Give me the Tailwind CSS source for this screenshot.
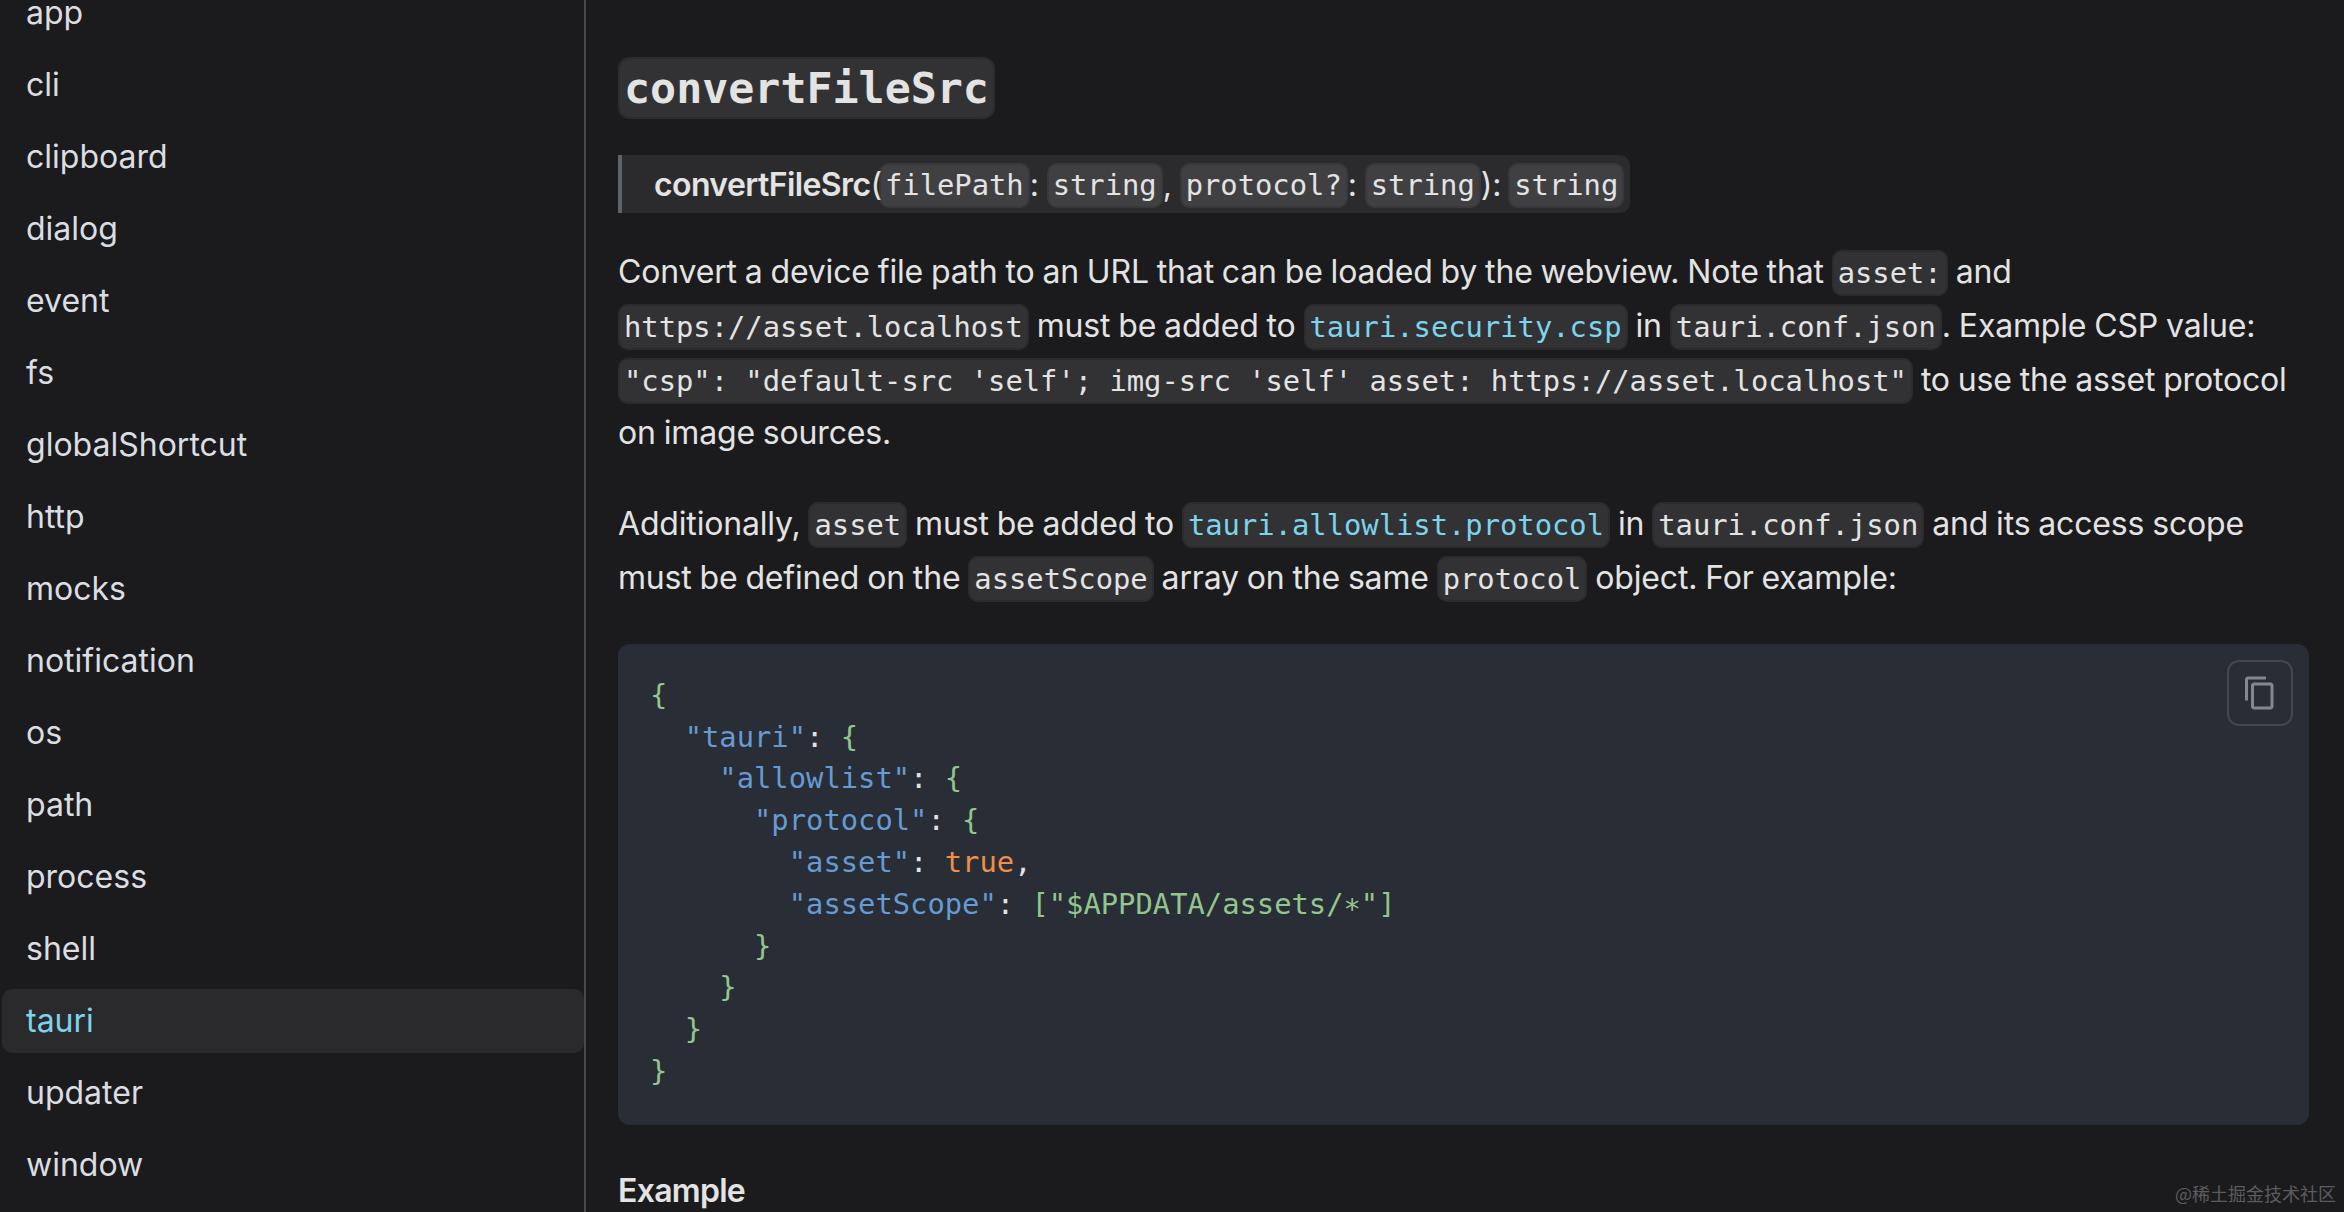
<!DOCTYPE html>
<html lang="en">
<head>
<meta charset="utf-8">
<title>tauri</title>
<script src="https://cdn.jsdelivr.net/npm/@tailwindcss/browser@4"></script>
</head>
<body class="bg-[#1b1b1d] text-[#e3e3e3] font-['Inter',sans-serif] overflow-hidden">
<div class="relative flex h-[1212px] w-[2344px] overflow-hidden">

    <!-- Sidebar -->
    <aside class="w-[586px] shrink-0 h-full overflow-hidden border-r-2 border-[#444950] pl-[2px]">
        <ul class="-mt-[19px] flex flex-col gap-[8px] text-[32px] leading-[64px] text-[#dadde1]">
            <li class="h-[64px] pl-[24px]">app</li>
            <li class="h-[64px] pl-[24px]">cli</li>
            <li class="h-[64px] pl-[24px]">clipboard</li>
            <li class="h-[64px] pl-[24px]">dialog</li>
            <li class="h-[64px] pl-[24px]">event</li>
            <li class="h-[64px] pl-[24px]">fs</li>
            <li class="h-[64px] pl-[24px]">globalShortcut</li>
            <li class="h-[64px] pl-[24px]">http</li>
            <li class="h-[64px] pl-[24px]">mocks</li>
            <li class="h-[64px] pl-[24px]">notification</li>
            <li class="h-[64px] pl-[24px]">os</li>
            <li class="h-[64px] pl-[24px]">path</li>
            <li class="h-[64px] pl-[24px]">process</li>
            <li class="h-[64px] pl-[24px]">shell</li>
            <li class="h-[64px] pl-[24px] rounded-[10px] bg-[#2a2a2c] text-[#7dd3ec]">tauri</li>
            <li class="h-[64px] pl-[24px]">updater</li>
            <li class="h-[64px] pl-[24px]">window</li>
        </ul>
    </aside>

    <!-- Content -->
    <main class="flex-1 pl-[32px] pr-[35px] pt-[57px] text-[32px] leading-[52.8px] tracking-[-0.17px] [word-spacing:-0.9px]">
        <h2 class="h-[62px] leading-[62px]">
            <code class="inline-block h-[62px] rounded-[12px] border-2 border-black/10 bg-white/10 px-[4px] font-['DejaVu_Sans_Mono',monospace] text-[43.3px] font-bold leading-[58px] tracking-normal">convertFileSrc</code>
        </h2>

        <div class="mt-[36px] flex h-[58px] w-fit items-center rounded-r-[10px] border-l-[4px] border-[#5c6470] bg-white/[.07] pl-[32px] pr-[6px] pt-[3px]">
            <span class="font-semibold tracking-[-0.6px]">convertFileSrc</span><span>(</span>
            <code class="-ml-[3px] h-[45px] rounded-[10px] border-2 border-black/10 bg-white/10 px-[4px] font-['DejaVu_Sans_Mono',monospace] text-[28.8px] leading-[41px] tracking-normal">filePath</code><span>:&nbsp;</span><code class="h-[45px] rounded-[10px] border-2 border-black/10 bg-white/10 px-[4px] font-['DejaVu_Sans_Mono',monospace] text-[28.8px] leading-[41px] tracking-normal">string</code><span>,&nbsp;</span><code class="h-[45px] rounded-[10px] border-2 border-black/10 bg-white/10 px-[4px] font-['DejaVu_Sans_Mono',monospace] text-[28.8px] leading-[41px] tracking-normal">protocol?</code><span>:&nbsp;</span><code class="h-[45px] rounded-[10px] border-2 border-black/10 bg-white/10 px-[4px] font-['DejaVu_Sans_Mono',monospace] text-[28.8px] leading-[41px] tracking-normal">string</code><span>):&nbsp;</span><code class="-ml-[1px] h-[45px] rounded-[10px] border-2 border-black/10 bg-white/10 px-[4px] font-['DejaVu_Sans_Mono',monospace] text-[28.8px] leading-[41px] tracking-normal">string</code>
        </div>

        <p class="mt-[33px]">
            Convert a device file path to an URL that can be loaded by the webview. Note that <code class="rounded-[10px] border-2 border-black/10 bg-white/10 px-[4px] py-[4px] font-['DejaVu_Sans_Mono',monospace] text-[28.8px] tracking-normal [word-spacing:0]">asset:</code> and<br>
            <code class="rounded-[10px] border-2 border-black/10 bg-white/10 px-[4px] py-[4px] font-['DejaVu_Sans_Mono',monospace] text-[28.8px] tracking-normal [word-spacing:0]">https://asset.localhost</code> must be added to <code class="rounded-[10px] border-2 border-black/10 bg-white/10 px-[4px] py-[4px] font-['DejaVu_Sans_Mono',monospace] text-[28.8px] tracking-normal [word-spacing:0] text-[#7dd3ec]">tauri.security.csp</code> in <code class="rounded-[10px] border-2 border-black/10 bg-white/10 px-[4px] py-[4px] font-['DejaVu_Sans_Mono',monospace] text-[28.8px] tracking-normal [word-spacing:0]">tauri.conf.json</code>. Example CSP value:<br>
            <code class="rounded-[10px] border-2 border-black/10 bg-white/10 px-[4px] py-[4px] font-['DejaVu_Sans_Mono',monospace] text-[28.8px] tracking-normal [word-spacing:0]">"csp": "default-src 'self'; img-src 'self' asset: https://asset.localhost"</code> to use the asset protocol<br>
            on image sources.
        </p>

        <p class="mt-[38px]">
            Additionally, <code class="rounded-[10px] border-2 border-black/10 bg-white/10 px-[4px] py-[4px] font-['DejaVu_Sans_Mono',monospace] text-[28.8px] tracking-normal [word-spacing:0]">asset</code> must be added to <code class="rounded-[10px] border-2 border-black/10 bg-white/10 px-[4px] py-[4px] font-['DejaVu_Sans_Mono',monospace] text-[28.8px] tracking-normal [word-spacing:0] text-[#7dd3ec]">tauri.allowlist.protocol</code> in <code class="rounded-[10px] border-2 border-black/10 bg-white/10 px-[4px] py-[4px] font-['DejaVu_Sans_Mono',monospace] text-[28.8px] tracking-normal [word-spacing:0]">tauri.conf.json</code> and its access scope<br>
            must be defined on the <code class="rounded-[10px] border-2 border-black/10 bg-white/10 px-[4px] py-[4px] font-['DejaVu_Sans_Mono',monospace] text-[28.8px] tracking-normal [word-spacing:0]">assetScope</code> array on the same <code class="rounded-[10px] border-2 border-black/10 bg-white/10 px-[4px] py-[4px] font-['DejaVu_Sans_Mono',monospace] text-[28.8px] tracking-normal [word-spacing:0]">protocol</code> object. For example:
        </p>

        <!-- Code block -->
        <div class="relative mt-[38px] h-[481px] rounded-[12px] bg-[#292d36]">
            <pre class="pl-[32px] pt-[31px] font-['DejaVu_Sans_Mono',monospace] text-[28.8px] leading-[41.8px] tracking-normal [word-spacing:0] text-[#e3e3e3]"><span class="text-[#93c58f]">{</span>
  <span class="text-[#659ad2]">"tauri"</span>: <span class="text-[#93c58f]">{</span>
    <span class="text-[#659ad2]">"allowlist"</span>: <span class="text-[#93c58f]">{</span>
      <span class="text-[#659ad2]">"protocol"</span>: <span class="text-[#93c58f]">{</span>
        <span class="text-[#659ad2]">"asset"</span>: <span class="text-[#f08d49]">true</span>,
        <span class="text-[#659ad2]">"assetScope"</span>: <span class="text-[#93c58f]">["$APPDATA/assets/<span class="relative top-[5px]">*</span>"]</span>
      <span class="text-[#93c58f]">}</span>
    <span class="text-[#93c58f]">}</span>
  <span class="text-[#93c58f]">}</span>
<span class="text-[#93c58f]">}</span></pre>
            <!-- Copy button -->
            <button type="button" class="absolute right-[16px] top-[16px] flex h-[66px] w-[66px] items-center justify-center rounded-[12px] border-2 border-[#44474f]">
                <svg class="h-[36px] w-[36px]" viewBox="0 0 24 24" fill="#85878b"><path d="M16 1H4c-1.1 0-2 .9-2 2v14h2V3h12V1zm3 4H8c-1.1 0-2 .9-2 2v14c0 1.1.9 2 2 2h11c1.1 0 2-.9 2-2V7c0-1.1-.9-2-2-2zm0 16H8V7h11v14z"/></svg>
            </button>
        </div>

        <h3 class="mt-[40px] font-semibold tracking-[-0.7px]">Example</h3>
    </main>

    <!-- Watermark -->
    <div class="absolute bottom-[8px] right-[8px] text-[18px] leading-[22px] text-[#5c5c5e] font-['Noto_Sans_CJK_SC',sans-serif]">@稀土掘金技术社区</div>
</div>
</body>
</html>
